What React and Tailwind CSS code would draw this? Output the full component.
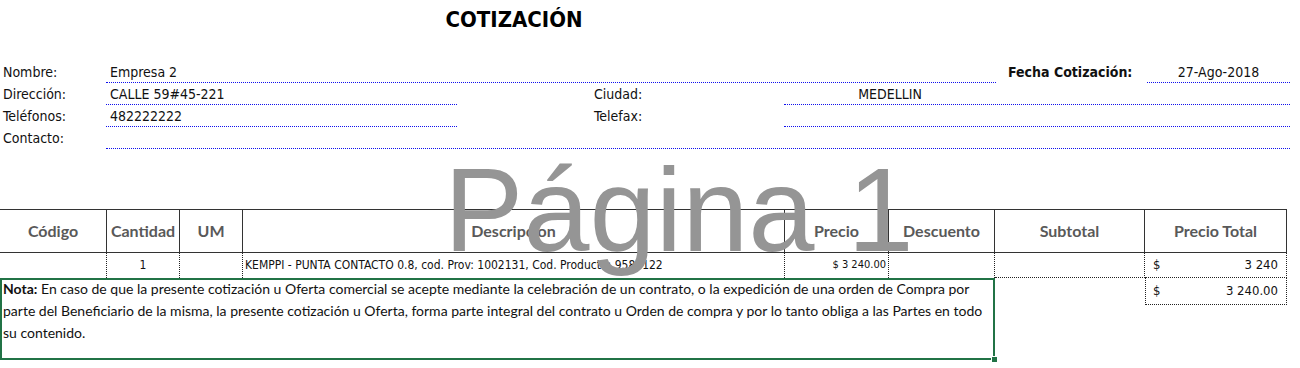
import React from 'react';

const tah = "font-['DejaVu_Sans_Condensed','DejaVu_Sans',sans-serif]";
const cal = "font-['Lato','Carlito',sans-serif]";
const dots = 'border-dotted border-[#1010ee]';

const cols = 'grid grid-cols-[107px_73px_63px_542px_104px_106px_150px_142px] w-[1287px]';

const headers = ['Código', 'Cantidad', 'UM', 'Descripcion', 'Precio', 'Descuento', 'Subtotal', 'Precio Total'];

const App = () => {
  return (
    <div className="relative w-[1300px] h-[368px] overflow-hidden bg-white text-[#111]">
      {/* Title */}
      <div className={`${tah} h-[61px] w-[1028px] pt-[6px] flex justify-center`}>
        <h1 className="text-[22px] font-bold leading-[28px] text-black">COTIZACIÓN</h1>
      </div>

      {/* Customer info */}
      <div className={`${tah} text-[14px] leading-[22px]`}>
        <div className="flex h-[22px]">
          <div className="w-[106px] pl-[3px]">Nombre:</div>
          <div className={`w-[890px] border-b ${dots} pl-[4px]`}>Empresa 2</div>
          <div className="w-[12px]" />
          <div className="w-[139px] font-bold">Fecha Cotización:</div>
          <div className={`w-[143px] border-b ${dots} text-center`}>27-Ago-2018</div>
        </div>
        <div className="flex h-[22px]">
          <div className="w-[106px] pl-[3px]">Dirección:</div>
          <div className={`w-[351px] border-b ${dots} pl-[4px]`}>CALLE 59#45-221</div>
          <div className="w-[137px]" />
          <div className="w-[190px]">Ciudad:</div>
          <div className={`w-[506px] border-b ${dots}`}>
            <div className="w-[212px] text-center">MEDELLIN</div>
          </div>
        </div>
        <div className="flex h-[22px]">
          <div className="w-[106px] pl-[3px]">Teléfonos:</div>
          <div className={`w-[351px] border-b ${dots} pl-[4px]`}>482222222</div>
          <div className="w-[137px]" />
          <div className="w-[190px]">Telefax:</div>
          <div className={`w-[506px] border-b ${dots}`} />
        </div>
        <div className="flex h-[22px]">
          <div className="w-[106px] pl-[3px]">Contacto:</div>
          <div className={`w-[1184px] border-b ${dots}`} />
        </div>
      </div>

      <div className="h-[60px]" />

      {/* Table header */}
      <div className={`${cols} ${cal} h-[44px] border-y border-[#333]`}>
        {headers.map((h) => (
          <div
            key={h}
            className="flex items-center justify-center border-r border-[#333] text-[16px] font-bold text-[#595959]"
          >
            {h}
          </div>
        ))}
      </div>

      {/* Item row */}
      <div className={`${cols} ${tah} h-[25px] text-[11px] leading-[24px]`}>
        <div className="border-r border-dotted border-[#222]" />
        <div className="border-r border-dotted border-[#222] text-center text-[12px]">1</div>
        <div className="border-r border-dotted border-[#222]" />
        <div className="border-r border-dotted border-[#222] pl-[2px] whitespace-nowrap text-[12px]">
          KEMPPI - PUNTA CONTACTO 0.8, cod. Prov: 1002131, Cod. Producto: 9580122
        </div>
        <div className="border-r border-dotted border-[#222] text-right pr-[2px]">$ 3 240.00</div>
        <div className="border-r border-dotted border-[#222]" />
        <div className="border-r border-b border-dotted border-[#222]" />
        <div className="border-r border-b border-dotted border-[#222] flex justify-between pl-[8px] pr-[8px] text-[13px]">
          <span>$</span>
          <span>3 240</span>
        </div>
      </div>

      {/* Note + total */}
      <div className="flex">
        <div className={`${cal} relative w-[995px] h-[82px] border-2 border-[#217346] text-[14px] leading-[22px] pl-[1px] whitespace-nowrap`}>
          <p className="-mt-[2px]">
            <span className="font-bold">Nota:</span> En caso de que la presente cotización u Oferta comercial se acepte mediante la celebración de un contrato, o la expedición de una orden de Compra por
          </p>
          <p>parte del Beneficiario de la misma, la presente cotización u Oferta, forma parte integral del contrato u Orden de compra y por lo tanto obliga a las Partes en todo</p>
          <p>su contenido.</p>
          <div className="absolute -right-[5px] -bottom-[5px] w-[7px] h-[7px] bg-[#217346] border border-white" />
        </div>
        <div className="w-[150px]" />
        <div className={`${tah} w-[142px] h-[27px] border-x border-b border-dotted border-[#222] flex justify-between items-center pl-[7px] pr-[8px] text-[13px]`}>
          <span>$</span>
          <span>3 240.00</span>
        </div>
      </div>

      {/* Page-break preview watermark */}
      <div className="pointer-events-none absolute left-[444px] top-[150px] font-['Liberation_Sans',Arial,sans-serif] text-[119px] leading-none text-[#959595] whitespace-nowrap">
        Página 1
      </div>
    </div>
  );
};

export default App;
